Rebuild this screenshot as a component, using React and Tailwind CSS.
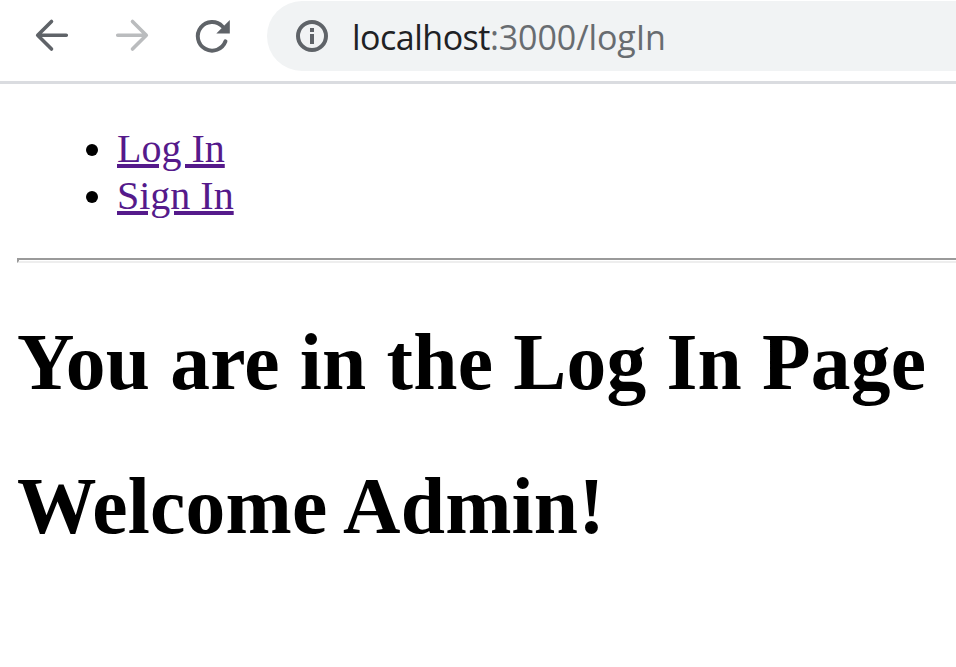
export default function App() {
  return (
    <div className="h-[667px] w-[956px] overflow-hidden bg-white text-black">
      <header className="flex h-[84px] items-start border-b-3 border-[#dadce0] bg-white">
        <nav className="flex w-[267px] shrink-0 gap-10 pt-[16px] pl-[32px]">
          <svg className="h-10 w-10" viewBox="0 0 40 40" fill="none" stroke="#5f6368" strokeWidth="3.6" strokeLinecap="round" strokeLinejoin="round">
            <path d="M34.300 19.300H6M19.500 5.500L5.700 19.300l13.800 13.800" />
          </svg>
          <svg className="h-10 w-10" viewBox="0 0 40 40" fill="none" stroke="#babcbe" strokeWidth="3.6" strokeLinecap="round" strokeLinejoin="round">
            <path d="M5.700 19.300H34M20.500 5.500l13.800 13.800-13.800 13.800" />
          </svg>
          <svg className="h-10 w-10" viewBox="0 0 40 40" fill="none">
            <path d="M30.500 10.500A14.300 14.300 0 1 0 33.500 25.300" stroke="#5f6368" strokeWidth="3.900" strokeLinecap="round" />
            <path d="M37.800 4v13.500H24.300z" fill="#5f6368" />
          </svg>
        </nav>
        <div className="mt-px flex h-[70px] grow items-center rounded-l-full bg-[#f1f3f4] pl-[28px]">
          <svg className="h-[34px] w-[34px]" viewBox="0 0 34 34" fill="none" stroke="#5f6368" strokeWidth="4">
            <circle cx="17" cy="17" r="14" />
            <path d="M17 15v10M17 9v4" />
          </svg>
          <span className="ml-[23px] pt-[2px] font-['Open_Sans',sans-serif] text-[34px] tracking-[-0.5px] text-[#202124]">
            localhost<span className="tracking-[-0.1px] text-[#686c70]">:3000/logIn</span>
          </span>
        </div>
      </header>
      <main className="pl-[17px] font-['Liberation_Serif',serif]">
        <ul className="list-disc pt-[41px] pl-[100px] text-[40px] leading-[47px]">
          <li><a className="text-[#551a8b] underline decoration-4 underline-offset-[2px]" href="#login">Log In</a></li>
          <li><a className="text-[#551a8b] underline decoration-4 underline-offset-[2px]" href="#signin">Sign In</a></li>
        </ul>
        <hr className="mt-[39px] h-[5px] border-t-2 border-b-2 border-l-2 border-t-[#9a9a9a] border-b-[#eeeeee] border-l-[#9a9a9a]" />
        <h1 className="mt-[54px] text-[79.500px] leading-[90px] font-bold tracking-[0.2px] whitespace-nowrap">You are in the Log In Page</h1>
        <h1 className="mt-[54px] text-[79.500px] leading-[90px] font-bold tracking-[0.2px] whitespace-nowrap">Welcome Admin!</h1>
      </main>
    </div>
  );
}
